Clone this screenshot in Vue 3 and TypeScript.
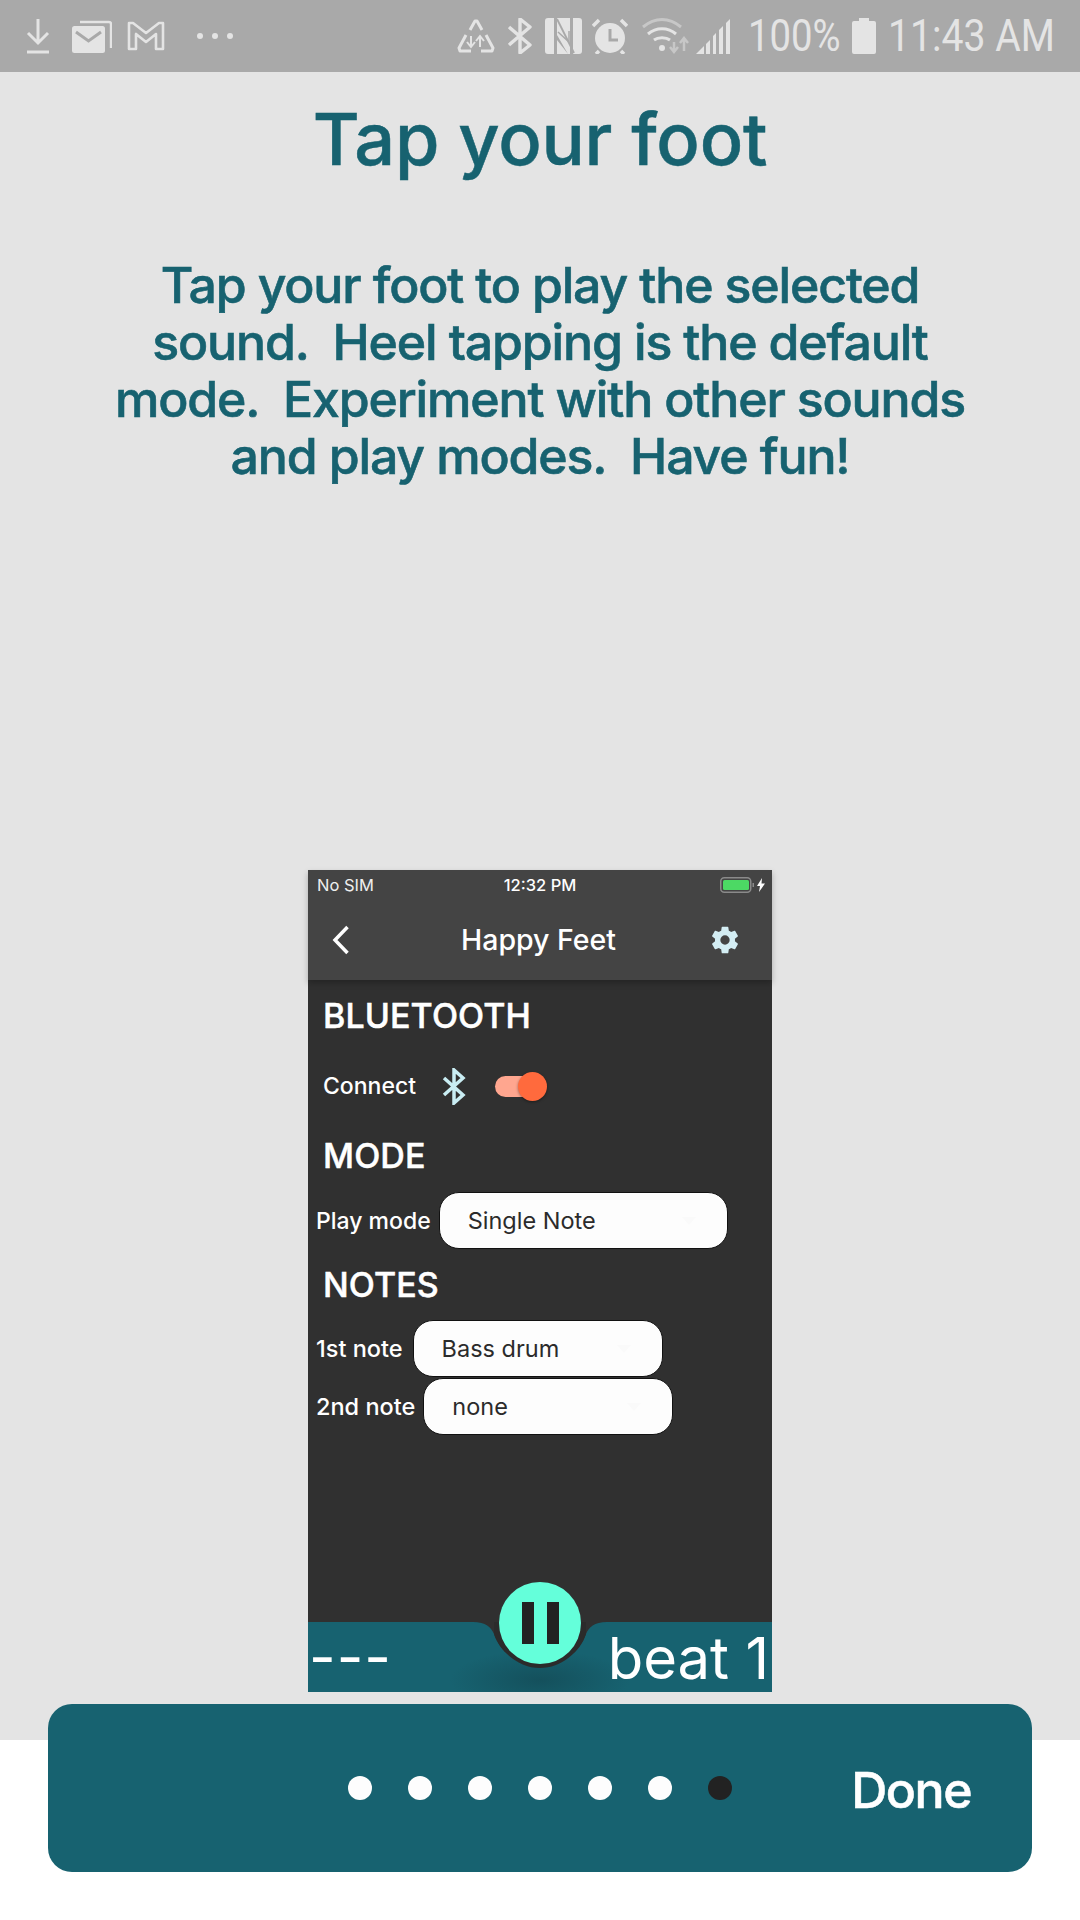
<script setup lang="ts">
const description: string[] = [
  'Tap your foot to play the selected',
  'sound.  Heel tapping is the default',
  'mode.  Experiment with other sounds',
  'and play modes.  Have fun!',
]
const dots: boolean[] = [false, false, false, false, false, false, true]
const notes = [
  { label: '1st note', value: 'Bass drum', cls: 'sel-first' },
  { label: '2nd note', value: 'none', cls: 'sel-second' },
]
</script>

<template>
  <div class="page">
    <header class="status">
      <div class="status-left">
        <svg class="i" width="24" height="36" viewBox="0 0 24 36"><path d="M12 1v24M2 15l10 10 10-10M1 34h22" fill="none" stroke="#e4e4e4" stroke-width="3"/></svg>
        <svg class="i mail" width="40" height="34" viewBox="0 0 40 34"><path d="M8 3h29a2 2 0 0 1 2 2v24" fill="none" stroke="#e4e4e4" stroke-width="2.4"/><rect x="0" y="7" width="33" height="27" rx="2.5" fill="#e4e4e4"/><path d="M4 13l12.500 9L29 13" fill="none" stroke="#a9a9a9" stroke-width="3"/></svg>
        <svg class="i m" width="38" height="30" viewBox="0 0 38 30"><path d="M2 28V2h4l13 10L32 2h4v26h-7V13l-10 8-10-8v15z" fill="none" stroke="#e4e4e4" stroke-width="2.600" stroke-linejoin="round"/></svg>
        <div class="more"><i></i><i></i><i></i></div>
      </div>
      <div class="status-right">
        <svg class="i" width="38" height="36" viewBox="0 0 38 36"><path d="M13 12l5-9h2l5 9M9 17L2 30l1 3h11M24 33h11l1-3-7-13" fill="none" stroke="#e4e4e4" stroke-width="3" stroke-linejoin="round"/><path d="M14 18v11M10 24l4 5 4-5M23 29V18M19 23l4-5 4 5" fill="none" stroke="#e4e4e4" stroke-width="2"/></svg>
        <svg class="i gap12" width="26" height="36" viewBox="0 0 26 36"><path d="M2 9l21 18-10 8V1l10 8L2 27" fill="none" stroke="#e4e4e4" stroke-width="3.400" stroke-linejoin="round"/></svg>
        <svg class="i gap12" width="37" height="36" viewBox="0 0 37 36"><path d="M3 0h6v36H3a3 3 0 0 1-3-3V3a3 3 0 0 1 3-3zM12 0h13v36h-2L12 17zM28 0h6a3 3 0 0 1 3 3v30a3 3 0 0 1-3 3H28zM12 22l11 14H12z" fill="#e4e4e4"/><path d="M12 1l17 34" fill="none" stroke="#a9a9a9" stroke-width="1.800"/><path d="M13 14l11 10V13" fill="none" stroke="#a9a9a9" stroke-width="1.500"/></svg>
        <svg class="i gap10" width="36" height="36" viewBox="0 0 36 36"><circle cx="18" cy="20" r="15" fill="#e4e4e4"/><path d="M1 8l6-6M35 8l-6-6M7 33l-3 3M29 33l3 3" stroke="#e4e4e4" stroke-width="3.500"/><path d="M18 11v11h8" fill="none" stroke="#a9a9a9" stroke-width="3"/></svg>
        <svg class="i gap14" width="48" height="36" viewBox="0 0 48 36"><path d="M1 9c12-10 26-10 38 0" fill="none" stroke="#c7c7c7" stroke-width="3"/><path d="M6 16c8-7 20-7 28 0M12 22c4-3 12-3 16 0" fill="none" stroke="#e4e4e4" stroke-width="3"/><circle cx="20" cy="30" r="3" fill="#e4e4e4"/><path d="M32 24v9M28 29l4 5 4-5" fill="none" stroke="#c7c7c7" stroke-width="2.500"/><path d="M42 33V21M38 25l4-5 4 5" fill="none" stroke="#c7c7c7" stroke-width="2.500"/></svg>
        <svg class="i gap6" width="36" height="36" viewBox="0 0 36 36"><path d="M0 36L8 28v8zM10 26l4-4v14h-4zM17 18l3-3v21h-3zM23 12l4-4v28h-4zM30 5l4-4v35h-4z" fill="#e4e4e4"/></svg>
        <span class="st-text pct">100%</span>
        <svg class="i" width="24" height="36" viewBox="0 0 24 36"><path d="M7 0h10v3h5a2 2 0 0 1 2 2v29a2 2 0 0 1-2 2H2a2 2 0 0 1-2-2V5a2 2 0 0 1 2-2h5z" fill="#e4e4e4"/></svg>
        <span class="st-text time">11:43 AM</span>
      </div>
    </header>

    <main class="intro">
      <h1 class="title">Tap your foot</h1>
      <div class="desc">
        <p v-for="line in description" :key="line">{{ line }}</p>
      </div>

      <section class="phone">
        <div class="nav">
          <div class="ios">
            <span>No SIM</span>
            <span class="ios-time">12:32 PM</span>
            <span class="ios-batt">
              <svg width="34" height="16" viewBox="0 0 34 16"><rect x=".75" y=".75" width="30" height="14.500" rx="3.500" fill="none" stroke="#8a8a8a" stroke-width="1.500"/><rect x="3" y="3" width="26" height="10" rx="1.500" fill="#4cd964"/><rect x="32.500" y="6" width="1.500" height="4" fill="#8a8a8a"/></svg>
              <svg width="8" height="14" viewBox="0 0 8 14"><path d="M5 0L0 8h3l-1 6 6-8.500H4.500z" fill="#fff"/></svg>
            </span>
          </div>
          <div class="bar">
            <svg width="18" height="30" viewBox="0 0 18 30"><path d="M15.500 2L3 15l12.500 13" fill="none" stroke="#fff" stroke-width="3.500"/></svg>
            <span class="bar-title">Happy Feet</span>
            <svg class="gear" width="32" height="32" viewBox="0 0 24 24"><path fill="#d4eef4" d="M19.430 12.980c.04-.32.070-.64.070-.98s-.03-.66-.07-.98l2.110-1.650c.19-.15.240-.42.120-.64l-2-3.460c-.12-.22-.39-.3-.61-.22l-2.490 1c-.52-.4-1.080-.73-1.690-.98l-.38-2.650A.49.49 0 0 0 14 2h-4c-.25 0-.46.180-.49.420l-.38 2.650c-.61.25-1.170.59-1.690.98l-2.490-1c-.23-.09-.49 0-.61.220l-2 3.460c-.13.220-.07.490.12.640l2.110 1.650c-.04.320-.07.650-.07.980s.03.660.07.980l-2.110 1.650c-.19.150-.24.420-.12.640l2 3.460c.12.220.39.300.61.220l2.490-1c.52.400 1.080.730 1.690.980l.38 2.650c.03.240.24.420.49.420h4c.25 0 .46-.18.490-.42l.38-2.650c.61-.25 1.170-.59 1.690-.98l2.490 1c.23.090.49 0 .61-.22l2-3.460c.12-.22.07-.49-.12-.64zM12 15.500a3.500 3.500 0 1 1 0-7 3.500 3.500 0 0 1 0 7z"/></svg>
          </div>
        </div>

        <div class="content">
          <h2 class="head head-bt">BLUETOOTH</h2>
          <div class="connect">
            <span class="label">Connect</span>
            <svg class="bt" width="24" height="37" viewBox="0 0 24 37"><path d="M2 10l19 17-9 8V2l9 8L2 27" fill="none" stroke="#c9edf3" stroke-width="3.500"/></svg>
            <span class="toggle"><i></i></span>
          </div>
          <h2 class="head head-mode">MODE</h2>
          <div class="field field-mode">
            <span class="label">Play mode</span>
            <div class="select sel-mode">Single Note<i class="caret"></i></div>
          </div>
          <h2 class="head head-notes">NOTES</h2>
          <div v-for="n in notes" :key="n.label" class="field field-note">
            <span class="label">{{ n.label }}</span>
            <div class="select" :class="n.cls">{{ n.value }}<i class="caret"></i></div>
          </div>
        </div>

        <div class="beat">
          <svg class="beat-bg" width="464" height="70" viewBox="0 0 464 70">
            <defs>
              <radialGradient id="glow" cx="50%" cy="50%" r="50%">
                <stop offset="0%" stop-color="#14505c"/>
                <stop offset="100%" stop-color="#176270"/>
              </radialGradient>
            </defs>
            <path fill="#176270" d="M0 0H165C178 0 183 5 186 12C192 30 211 46 232 46C253 46 272 30 278 12C281 5 286 0 299 0H464V70H0z"/>
            <ellipse cx="232" cy="58" rx="90" ry="30" fill="url(#glow)"/>
            <path fill="#2b2b2b" d="M186 12C192 30 211 46 232 46C253 46 272 30 278 12L278 0H186z"/>
          </svg>
          <span class="beat-dash">---</span>
          <span class="beat-text">beat 1</span>
          <button class="fab" type="button" aria-label="Pause"><i></i><i></i></button>
        </div>
      </section>
    </main>

    <footer class="foot">
      <div class="card">
        <div class="dots">
          <span v-for="(on, i) in dots" :key="i" class="dot" :class="{ on }"></span>
        </div>
        <span class="done">Done</span>
      </div>
    </footer>
  </div>
</template>

<style>
html, body { margin: 0; background: #fff; }
</style>

<style scoped>
.page {
  width: 1080px;
  height: 1920px;
  display: flex;
  flex-direction: column;
  overflow: hidden;
  font-family: Inter, "Noto Sans", sans-serif;
}
.status {
  height: 72px;
  flex: none;
  background: #a9a9a9;
  display: flex;
  justify-content: space-between;
  align-items: center;
  padding: 0 26px;
}
.status-left, .status-right { display: flex; align-items: center; }
.i { display: block; flex: none; }
.mail { margin-left: 22px; }
.m { margin-left: 15px; }
.more { display: flex; gap: 9px; margin-left: 32px; }
.more i { width: 6px; height: 6px; border-radius: 50%; background: #e4e4e4; }
.gap6 { margin-left: 6px; }
.gap10 { margin-left: 10px; }
.gap12 { margin-left: 12px; }
.gap14 { margin-left: 14px; }
.st-text {
  display: block;
  font-family: Roboto, sans-serif;
  font-size: 44px;
  line-height: 72px;
  color: #e4e4e4;
  white-space: nowrap;
  transform-origin: left center;
}
.pct { width: 104px; margin-left: 16px; transform: scaleX(.87); }
.time { width: 166px; transform: scaleX(.89); margin-left: 12px; }

.intro {
  flex: 1;
  background: #e4e4e4;
  display: flex;
  flex-direction: column;
  align-items: center;
  color: #176270;
}
.title {
  margin: 23px 0 0;
  font-size: 72px;
  line-height: 88px;
  font-weight: 500;
  letter-spacing: -.2px;
  -webkit-text-stroke: .5px #176270;
}
.desc { margin-top: 74px; text-align: center; }
.desc p {
  margin: 0;
  font-size: 50px;
  line-height: 57px;
  font-weight: 500;
  letter-spacing: -1.15px;
  white-space: pre;
  -webkit-text-stroke: .6px #176270;
}
.phone {
  width: 464px;
  height: 822px;
  margin-top: 385px;
  flex: none;
  background: #303030;
  display: flex;
  flex-direction: column;
  color: #fff;
}
.nav {
  height: 110px;
  flex: none;
  background: #444;
  box-shadow: 0 3px 6px rgba(0,0,0,.25);
  position: relative;
}
.ios {
  height: 30px;
  padding: 0 7px 0 9px;
  display: grid;
  grid-template-columns: 1fr auto 1fr;
  align-items: center;
  font-size: 16.5px;
  color: #eee;
}
.ios-time { font-weight: 500; color: #fff; margin-right: 2px; }
.ios-batt { display: flex; justify-content: flex-end; align-items: center; gap: 3px; }
.ios-batt svg { display: block; }
.bar {
  height: 80px;
  padding: 0 31px 0 24px;
  display: grid;
  grid-template-columns: 1fr auto 1fr;
  align-items: center;
}
.bar svg { display: block; }
.bar .gear { justify-self: end; }
.bar-title { font-size: 28.5px; font-weight: 500; margin-left: 4px; margin-top: -2px; }

.content { flex: 1; padding: 0 8px; }
.head {
  margin: 0 0 0 7px;
  font-size: 34px;
  line-height: 42px;
  font-weight: 500;
  letter-spacing: .1px;
  -webkit-text-stroke: .5px #fff;
}
.head-bt { margin-top: 15px; }
.head-mode { margin-top: 29px; }
.head-notes { margin-top: 15px; }
.label { font-size: 23px; font-weight: 500; white-space: nowrap; }
.field-note .label { font-size: 23.5px; }
.connect {
  display: flex;
  align-items: center;
  height: 40px;
  margin: 29px 0 0 7px;
}
.bt { margin-left: 26px; display: block; }
.toggle {
  width: 42px;
  height: 21px;
  margin-left: 29px;
  border-radius: 11px;
  background: #ffa68f;
  position: relative;
}
.toggle i {
  position: absolute;
  right: -10px;
  top: -4px;
  width: 29px;
  height: 29px;
  border-radius: 50%;
  background: #ff6a3d;
  box-shadow: 0 1px 3px rgba(0,0,0,.4);
}
.field { display: flex; align-items: center; }
.field-mode { margin-top: 15px; gap: 8px; }
.field-note { margin-top: 1px; gap: 8px; }
.head-notes + .field-note { margin-top: 14px; gap: 10px; }
.select {
  height: 57px;
  box-sizing: border-box;
  display: flex;
  align-items: center;
  justify-content: space-between;
  padding: 0 27px 0 28px;
  border: 1px solid #111;
  border-radius: 20px;
  background: #fdfdfd;
  color: #2b2b2b;
  font-size: 23.5px;
}
.sel-mode { width: 289px; }
.sel-first, .sel-second { width: 250px; }
.caret {
  width: 0;
  height: 0;
  margin-right: 4px;
  border: 7px solid transparent;
  border-top: 8px solid #fafafa;
  border-bottom: 0;
}

.beat {
  height: 70px;
  flex: none;
  position: relative;
}
.beat-bg { position: absolute; left: 0; top: 0; display: block; }
.beat-dash {
  position: absolute;
  left: 1px;
  top: 0;
  font-size: 58px;
  line-height: 70px;
  letter-spacing: 1px;
  font-weight: 400;
}
.beat-text {
  position: absolute;
  right: 3px;
  top: 1px;
  font-size: 58px;
  line-height: 70px;
  white-space: nowrap;
}
.fab {
  position: absolute;
  left: 191px;
  top: -40px;
  width: 82px;
  height: 82px;
  padding: 0;
  border: 0;
  border-radius: 50%;
  background: #64ffda;
  display: flex;
  align-items: center;
  justify-content: center;
  gap: 13px;
}
.fab i { width: 12px; height: 42px; background: #222; }

.foot {
  flex: none;
  height: 228px;
  padding: 12px 48px 48px;
  box-sizing: border-box;
  background: linear-gradient(#e4e4e4 48px, #fff 48px);
}
.card {
  height: 168px;
  border-radius: 24px;
  background: #176270;
  display: flex;
  align-items: center;
  position: relative;
}
.dots {
  display: flex;
  gap: 36px;
  margin-left: 300px;
}
.dot { width: 24px; height: 24px; border-radius: 50%; background: #fdfdfd; }
.dot.on { background: #222; }
.done {
  position: absolute;
  right: 61px;
  top: 56px;
  color: #fff;
  font-size: 50px;
  line-height: 60px;
  font-weight: 500;
  letter-spacing: -1.5px;
  -webkit-text-stroke: .5px #fff;
}
</style>
